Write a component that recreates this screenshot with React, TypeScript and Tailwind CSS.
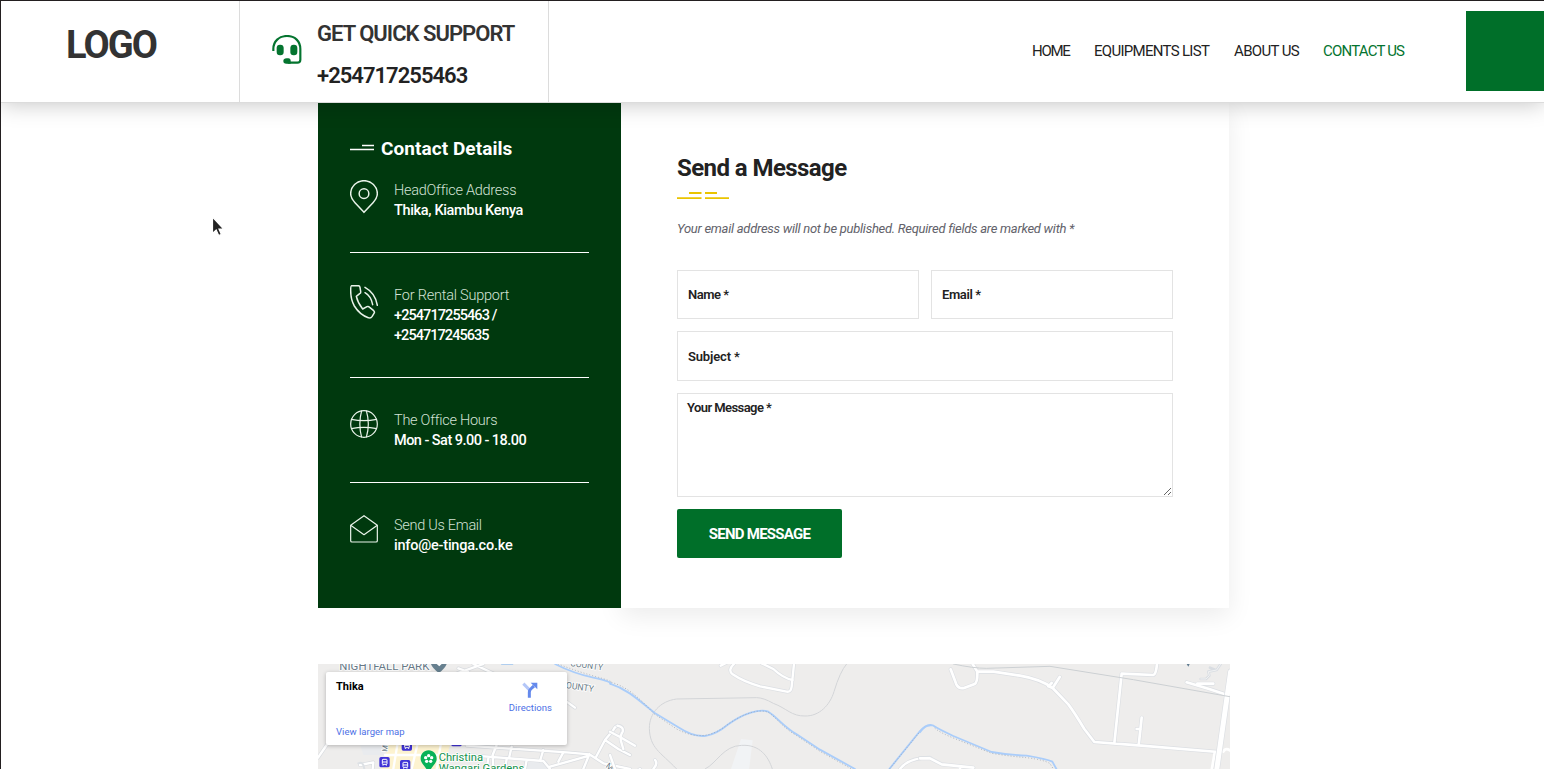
import type { ReactNode } from "react";

function HeadsetIcon() {
  return (
    <svg className="h-[30px] w-[30px] shrink-0" viewBox="95 105 90 90" fill="none">
      <path d="M99 153V147C99 124 116 108 140 108C164 108 180 124 180 147V179Q180 188 171 188H142" stroke="#04742f" strokeWidth="6.5" />
      <rect x="109" y="134" width="21" height="32" rx="10" fill="#04742f" />
      <rect x="150" y="134" width="21" height="32" rx="10" fill="#04742f" />
      <path d="M139 175H144Q151 175 151 183V191H138Q129 191 129 183Q129 175 139 175Z" fill="#04742f" />
    </svg>
  );
}

function PinIcon() {
  return (
    <svg className="h-[34px] w-[28px] shrink-0" viewBox="96 240 84 102" fill="none" stroke="#e9f3ea" strokeWidth="4.5">
      <path d="M138 337L111 308C102 298 98 290 98 281A40 39 0 0 1 178 281C178 290 174 298 165 308Z" strokeLinejoin="round" />
      <circle cx="138" cy="281" r="14.5" />
    </svg>
  );
}

function PhoneIcon() {
  return (
    <svg className="h-[34px] w-[28px] shrink-0" viewBox="96 554 84 102" fill="none" stroke="#e9f3ea" strokeWidth="4.5" strokeLinejoin="round" strokeLinecap="round">
      <path d="M101 556H121Q125 556 126 561L128 573Q129 578 125 580L115 588Q119 607 134 626L147 619Q151 617 155 621L167 631Q171 635 168 639L162 649Q158 655 151 652Q126 644 109 617Q98 598 98 570Q98 556 101 556Z" />
      <path d="M141 561Q172 578 178 615" />
      <path d="M141 577Q159 587 164 613" />
    </svg>
  );
}

function GlobeIcon() {
  return (
    <svg className="h-[28px] w-[28px] shrink-0" viewBox="96 150 84 84" fill="none" stroke="#e9f3ea" strokeWidth="3.6">
      <circle cx="138" cy="192" r="40" />
      <path d="M131 152Q120 192 131 232M145 152Q157 192 145 232" />
      <path d="M100 178Q138 186 176 178M100 206Q138 198 176 206" />
    </svg>
  );
}

function MailIcon() {
  return (
    <svg className="h-[28px] w-[28px] shrink-0" viewBox="96 464 84 84" fill="none" stroke="#e9f3ea" strokeWidth="3.6" strokeLinejoin="round">
      <path d="M98 495L138 466L178 495V541Q178 545 174 545H102Q98 545 98 541Z" />
      <path d="M98 495L138 523L178 495" />
    </svg>
  );
}

const contacts = [
  { icon: <PinIcon />, label: "HeadOffice Address", track: "tracking-[-0.26px]", lines: [{ text: "Thika, Kiambu Kenya", track: "tracking-[-0.345px]" }] },
  {
    icon: <PhoneIcon />,
    label: "For Rental Support",
    track: "tracking-[-0.22px]",
    lines: [
      { text: "+254717255463 /", track: "tracking-[-0.92px]" },
      { text: "+254717245635", track: "tracking-[-0.95px]" },
    ],
  },
  { icon: <GlobeIcon />, label: "The Office Hours", track: "tracking-[-0.26px]", lines: [{ text: "Mon - Sat 9.00 - 18.00", track: "tracking-[-0.54px]" }] },
  { icon: <MailIcon />, label: "Send Us Email", track: "tracking-[-0.28px]", lines: [{ text: "info@e-tinga.co.ke", track: "tracking-[-0.22px]" }] },
];

const nav = [
  { text: "HOME", style: "w-[38px] tracking-[-1.3px]" },
  { text: "EQUIPMENTS LIST", style: "w-[116px] tracking-[-0.7px]" },
  { text: "ABOUT US", style: "w-[65px] tracking-[-0.65px]" },
  { text: "CONTACT US", style: "w-[82px] tracking-[-0.8px] text-[#04742f]" },
];

function Field({ children, size }: { children: ReactNode; size: string }) {
  return (
    <label className={`flex items-center border border-[#e3e3e3] px-[10px] text-[13px] font-semibold text-[#222] ${size}`}>
      {children}
      <input className="w-0 flex-1 outline-none" />
    </label>
  );
}

function BusStop({ x, y }: { x: number; y: number }) {
  return (
    <g transform={`translate(${x} ${y})`}>
      <rect width="31" height="31" rx="5" fill="#4033d6" />
      <rect x="9" y="7" width="14" height="15" rx="2" fill="none" stroke="#fff" strokeWidth="3" />
      <path d="M9 15H23M11 22V26M21 22V26" stroke="#fff" strokeWidth="3" />
    </g>
  );
}

const westRoads =
  "M24 308L50 270M150 330L190 322L188 342M445 40L475 51M490 27L560 60M400 70L520 27M560 270L548 300L550 342M470 272L770 292L838 298M470 300L700 318L720 342M605 275L598 305M700 285L690 318M760 292L745 320M535 310L530 342M590 312L585 342M650 315L645 342M838 298L880 325L960 342M858 306L885 255L910 225Q918 208 932 214Q942 220 934 235M885 255L925 282L960 300M770 140L795 158M838 298L820 342M720 335L838 302";
const centreRoads =
  "M332 32L352 22M372 27Q352 45 368 58Q400 80 450 94L530 110Q543 112 545 95L552 27M455 25L490 42Q520 70 548 75M0 230L30 246L75 272M22 212Q42 216 38 230Q28 245 34 262L40 282M0 300L15 342M50 375L90 342M135 315Q145 325 130 342M870 342Q895 308 960 308";
const eastRoads =
  "M92 43L109 88Q116 102 132 99L164 87Q173 82 172 50L158 27M172 50H220L300 62Q360 72 398 99L445 148Q463 172 493 222L523 261L655 271L895 291M398 99L385 94L395 84M398 99L419 66M583 265L605 56L700 60Q708 58 711 27M656 271L665 188M650 222H662M800 82L865 101L922 120M832 86H880M0 310H30L65 328L160 338M120 338V345";

function MapView() {
  return (
    <svg className="block h-[105px] w-[912px] font-['Roboto',sans-serif]" viewBox="0 0 912 105">
      <rect width="912" height="105" fill="#eeedec" />
      <g transform="translate(-8 -9) scale(.33333)">
        <path d="M150 270H220V300H160Z M640 318H712V345H650Z" fill="#e9ebee" />
        <path d="M215 342L235 270H420L400 342Z" fill="#fdf3d0" />
        <g fill="none" strokeLinecap="round" strokeLinejoin="round">
          <path d={westRoads} stroke="#d9dce0" strokeWidth="11" />
          <path d={westRoads} stroke="#fff" strokeWidth="7" />
          <path d="M262 270L250 342M322 270L305 342M392 270L380 342M225 300H400" stroke="#fff" strokeWidth="7" />
          <path d="M145 325Q160 318 163 342" stroke="#dde1e5" strokeWidth="6" />
          <path d="M735 27Q790 55 850 68T902 87" stroke="#aacdfa" strokeWidth="5" />
          <path d="M745 27Q800 49 855 64T905 83" stroke="#969fab" strokeWidth="2" strokeDasharray="1 8" />
          <path d="M575 27H608" stroke="#9cc4ef" strokeWidth="4" />
        </g>
        <path d="M363 27H410Q406 39 387 54Q367 40 363 27Z" fill="#67808f" />
        <path d="M380 27H395L388 34Z" fill="#fff" />
        <g fill="#697b87" stroke="#fff" strokeWidth="5" paintOrder="stroke">
          <text x="88" y="46" fontSize="33" textLength="270" lengthAdjust="spacingAndGlyphs" fill="#687987">NIGHTFALL PARK</text>
          <text x="750" y="97" fontSize="27" textLength="101" lengthAdjust="spacingAndGlyphs" transform="rotate(8 750 97)">COUNTY</text>
          <text x="780" y="33" fontSize="27" textLength="99" lengthAdjust="spacingAndGlyphs" transform="rotate(8 780 33)">COUNTY</text>
          <text x="232" y="290" fontSize="22" transform="rotate(-86 232 290)">M</text>
          <text x="886" y="335" fontSize="25" transform="rotate(38 886 335)">Mu</text>
        </g>
        <BusStop x={275} y={256} />
        <BusStop x={208} y={306} />
        <BusStop x={270} y={315} />
        <BusStop x={424} y={243} />
        <path d="M356 286C341 286 332 297 332 311C332 324 345 333 354 350H358C367 333 380 324 380 311C380 297 370 286 356 286Z" fill="#09b257" />
        <g fill="#fff">
          <circle cx="356" cy="302" r="5" />
          <circle cx="365" cy="308" r="5" />
          <circle cx="362" cy="319" r="5" />
          <circle cx="350" cy="319" r="5" />
          <circle cx="347" cy="308" r="5" />
        </g>
        <g fill="#14924b" stroke="#fff" strokeWidth="5" paintOrder="stroke" fontSize="33">
          <text x="386" y="317" textLength="133" lengthAdjust="spacingAndGlyphs">Christina</text>
          <text x="386" y="350" textLength="257" lengthAdjust="spacingAndGlyphs">Wangari Gardens</text>
        </g>
      </g>
      <g transform="translate(292 -9) scale(.33333)">
        <path d="M393 252L428 256L417 345H362Z" fill="#f1f3f5" />
        <path d="M710 27Q690 50 672 110C660 150 628 184 585 183C545 184 530 160 490 145Q460 128 440 128L200 132C150 138 118 175 118 220C120 280 150 290 200 342M285 342C320 325 340 272 395 271C450 268 475 305 487 342" fill="none" stroke="#d3d5d8" strokeWidth="3" />
        <g fill="none" strokeLinecap="round" strokeLinejoin="round">
          <path d={centreRoads} stroke="#dcdfe3" strokeWidth="11" />
          <path d={centreRoads} stroke="#fff" strokeWidth="7" />
          <path d="M0 86C50 102 80 130 133 173L205 217C270 260 310 245 355 208C400 175 450 160 475 170C500 185 520 215 560 238L630 284L735 342M838 342L930 228Q945 210 962 211" stroke="#aacdfa" strokeWidth="5.5" />
          <path d="M5 82C55 98 85 126 133 177L200 222C265 256 310 243 355 207C400 176 450 158 478 174C500 190 520 219 560 242L630 289L725 342M840 340L930 230" stroke="#969fab" strokeWidth="2" strokeDasharray="1 8" />
        </g>
      </g>
      <g transform="translate(602 -9) scale(.33333)">
        <g fill="none" strokeLinecap="round" strokeLinejoin="round">
          <path d="M902 27L890 45L865 50L868 62L858 72H842M870 38L885 44" stroke="#d9dde2" strokeWidth="8" />
          <path d="M902 27L890 45L865 50L868 62L858 72H842" stroke="#f1f2f3" strokeWidth="3" />
          <path d={eastRoads} stroke="#dcdfe3" strokeWidth="12" />
          <path d={eastRoads} stroke="#fff" strokeWidth="8" />
          <path d="M875 345L884 294M910 290Q918 275 935 290" stroke="#fff" strokeWidth="8" />
          <path d="M932 50L890 345" stroke="#dcdfe3" strokeWidth="19" />
          <path d="M932 50L890 345" stroke="#fff" strokeWidth="15" />
          <path d="M100 27Q160 40 200 40L390 34L640 74L935 126" stroke="#ccd0d3" strokeWidth="3" />
          <path d="M0 232Q18 205 38 211Q60 225 100 243L215 291Q270 300 320 302Q380 312 397 320L411 345" stroke="#aacdfa" strokeWidth="5.5" />
          <path d="M45 220Q60 233 100 249L215 295Q270 304 320 308Q375 315 390 326L402 345" stroke="#969fab" strokeWidth="2" strokeDasharray="1 8" />
        </g>
        <path d="M800 27H809L805 35Z" fill="#5f7b90" />
      </g>
    </svg>
  );
}

export default function App() {
  return (
    <div className="relative flex h-[769px] flex-col overflow-hidden border-t border-l border-[#231f20] bg-white font-['Roboto',sans-serif]">
      <header className="relative z-10 flex h-[102px] shrink-0 border-b border-[#dcdcdc] bg-white shadow-[0_0_22px_rgba(0,0,0,0.25)]">
        <div className="flex w-[239px] border-r border-[#dcdcdc] pt-[21px] pl-[65px]">
          <span className="text-[38px] leading-[46px] font-bold tracking-[-1.9px] text-[#333]">LOGO</span>
        </div>
        <div className="flex w-[309px] items-start border-r border-[#dcdcdc] pl-8">
          <div className="pt-[34px]"><HeadsetIcon /></div>
          <div className="flex flex-col items-start pt-[12px] pl-[15px] text-[22px] leading-[42px] font-semibold whitespace-nowrap">
            <span className="tracking-[-0.98px] text-[#333]">GET QUICK SUPPORT</span>
            <span className="tracking-[-0.97px] text-[#222]">+254717255463</span>
          </div>
        </div>
        <nav className="ml-[483px] flex gap-6 pt-[40px] text-[15px] leading-5 whitespace-nowrap text-[#222] [font-weight:450]">
          {nav.map((n) => <a key={n.text} className={n.style}>{n.text}</a>)}
        </nav>
        <div className="mt-[10px] ml-auto h-[80px] w-[78px] bg-[#006f29]" />
      </header>
      <main className="flex flex-1 flex-col pl-[317px]">
        <section className="flex h-[505px] w-[911px] shrink-0">
          <aside className="relative w-[303px] bg-[#00390e] px-8 pt-[33px] text-white">
            <h2 className="mb-5 flex h-6 items-center gap-[7px] text-[19px] leading-6 font-bold">
              <svg className="h-2 w-6" viewBox="0 0 24 8"><path d="M12 1.500H24M0 5.500H24" stroke="#fff" strokeWidth="1.300" /></svg>
              <span className="pt-px tracking-[0.06px]">Contact Details</span>
            </h2>
            {contacts.map((c) => (
              <div key={c.label} className="mb-8 flex gap-4 border-b border-white pb-8 last:border-0">
                {c.icon}
                <div className="-mb-px flex flex-col items-start pt-px text-[14.5px] leading-5 whitespace-nowrap">
                  <span className={`font-light text-[#d3e2d6] ${c.track}`}>{c.label}</span>
                  {c.lines.map((l) => <span key={l.text} className={`font-medium ${l.track}`}>{l.text}</span>)}
                </div>
              </div>
            ))}
          </aside>
          <form className="flex flex-1 flex-col px-14 pt-[47px] shadow-[0_8px_24px_rgba(0,0,0,0.08)]">
            <h1 className="text-[24px] leading-9 font-bold tracking-[-0.57px] text-[#222]">Send a Message</h1>
            <svg className="mt-[5px] h-[9px] w-[52px]" viewBox="0 0 52 9">
              <path d="M12 1H24.500V3H12ZM28 1H40V3H28ZM0 6.300H24.500V8H0ZM28 6.300H52V8H28Z" fill="#eac400" />
            </svg>
            <p className="mt-[19px] text-[13px] leading-5 tracking-[-0.27px] whitespace-nowrap text-[#62626a] italic">Your email address will not be published. Required fields are marked with *</p>
            <div className="mt-[31px] flex gap-3">
              <Field size="h-[49px] flex-1"><span className="tracking-[-0.5px]">Name *</span></Field>
              <Field size="h-[49px] flex-1"><span className="tracking-[-0.4px]">Email *</span></Field>
            </div>
            <Field size="mt-3 h-[50px] pt-px"><span className="tracking-[-0.16px]">Subject *</span></Field>
            <label className="mt-3 flex h-[104px] flex-col border border-[#e3e3e3] text-[13px] leading-5 font-semibold text-[#222]">
              <span className="pt-1 pl-[9px] tracking-[-0.57px]">Your Message *</span>
              <textarea className="min-h-0 flex-1 resize outline-none" />
            </label>
            <button type="button" className="mt-3 h-[49px] w-[165px] rounded-[2px] bg-[#006f29] pt-px text-[15px] font-bold tracking-[-0.75px] text-white">SEND MESSAGE</button>
          </form>
        </section>
        <section className="relative mt-14 h-[105px] w-[912px] shrink-0 overflow-hidden">
          <MapView />
          <div className="absolute top-2 left-2 flex h-[73px] w-[241px] justify-between rounded-[2px] bg-white pt-[9px] pr-[15px] pb-[7px] pl-[10px] shadow-[0_1px_4px_rgba(0,0,0,0.25)]">
            <div className="flex flex-col justify-between leading-3">
              <b className="text-[11px] font-bold text-black">Thika</b>
              <a className="text-[9.5px] tracking-[0.02px] text-[#4c6fe6]">View larger map</a>
            </div>
            <div className="flex flex-col items-center">
              <svg className="mt-px h-[16px] w-[16px]" viewBox="0 0 48 48" fill="none">
                <path d="M4 5L24 25" stroke="#b4c7f8" strokeWidth="9" />
                <path d="M22 47V31Q22 24 28 19L36 12" stroke="#6489ec" strokeWidth="9" />
                <path d="M26 2H46V22Z" fill="#6489ec" />
              </svg>
              <a className="mt-[4px] text-[9.5px] leading-3 tracking-[0.05px] text-[#4c6fe6]">Directions</a>
            </div>
          </div>
        </section>
      </main>
      <svg className="absolute top-[215px] left-[210px] z-20 h-[21px] w-[14px]" viewBox="0 0 14 21">
        <path d="M1.500 1V17.500L5.200 14L7.700 19.500L10.300 18.300L8 13H12.700Z" fill="#222" stroke="#fff" strokeWidth="1.200" />
      </svg>
    </div>
  );
}
